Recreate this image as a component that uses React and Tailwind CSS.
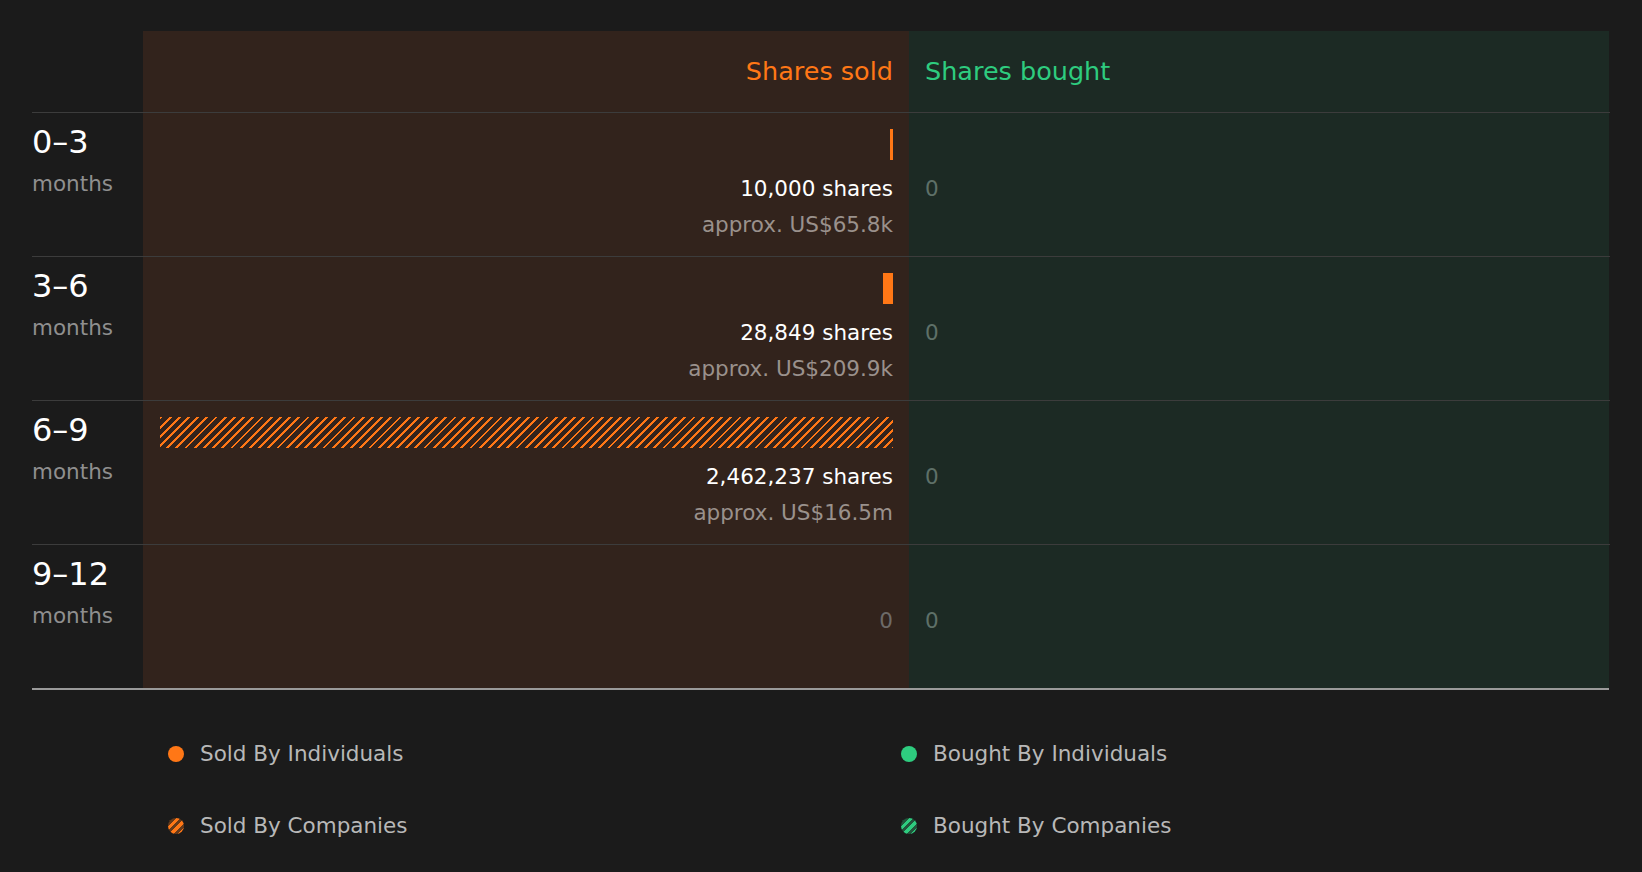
const rows = [
  { label: "0–3", bar: 3, shares: "10,000 shares", approx: "approx. US$65.8k" },
  { label: "3–6", bar: 10, shares: "28,849 shares", approx: "approx. US$209.9k" },
  { label: "6–9", bar: 733, hatch: true, shares: "2,462,237 shares", approx: "approx. US$16.5m" },
  { label: "9–12" },
];

const hatch =
  "bg-[repeating-linear-gradient(135deg,#ff7716_0_2px,transparent_2px_6.5px)]";

function Row({ r }) {
  return (
    <div className="flex h-[144px] border-t border-[#3c3c3c]">
      <div className="w-[111px] pt-[9px]">
        <div className="text-[32px] leading-[40px] text-white">{r.label}</div>
        <div className="text-[21.5px] leading-[28px] mt-[8px] text-[#8f8f8f]">months</div>
      </div>
      <div className="w-[766px] bg-[#32231c] pt-[16px] pr-[16px] flex flex-col items-end">
        <div className="h-[31px] flex justify-end">
          {r.bar ? (
            <div
              className={r.hatch ? hatch : "bg-[#ff7716]"}
              style={{ width: r.bar, height: 31 }}
            />
          ) : null}
        </div>
        {r.shares ? (
          <>
            <div className="mt-[15px] text-[21.5px] leading-[28px] text-white">{r.shares}</div>
            <div className="mt-[8px] text-[21.5px] leading-[28px] text-[#9a918c]">{r.approx}</div>
          </>
        ) : (
          <div className="mt-[15px] text-[21.5px] leading-[28px] text-[#6d6a68]">0</div>
        )}
      </div>
      <div className="w-[700px] bg-[#1c2a24] pt-[62px] pl-[16px]">
        <div className="text-[21.5px] leading-[28px] text-[#5e7068]">0</div>
      </div>
    </div>
  );
}

function Legend({ color, hatched, text }) {
  return (
    <div className="flex items-center gap-[16px]">
      <div
        className="w-[16px] h-[16px] rounded-full"
        style={
          hatched
            ? {
                background: `repeating-linear-gradient(135deg, ${color} 0 3px, ${color}55 3px 6px)`,
              }
            : { background: color }
        }
      />
      <span className="text-[21.5px] leading-[30px] text-[#b8b8b8]">{text}</span>
    </div>
  );
}

export default function App() {
  return (
    <div
      className="w-[1642px] h-[872px] bg-[#1b1b1b] px-[32px] pt-[31px]"
      style={{ fontFamily: '"DejaVu Sans", sans-serif' }}
    >
      <div className="flex h-[81px]">
        <div className="w-[111px]" />
        <div className="w-[766px] bg-[#32231c] flex items-center justify-end pr-[16px] text-[25.5px] text-[#ff7716]">
          Shares sold
        </div>
        <div className="w-[700px] bg-[#1c2a24] flex items-center pl-[16px] text-[25.5px] text-[#2ecc7f]">
          Shares bought
        </div>
      </div>
      {rows.map((r) => (
        <Row key={r.label} r={r} />
      ))}
      <div className="border-t-2 border-[#9a9a9a] w-[1577px]" />
      <div className="grid grid-cols-[733px_700px] pl-[136px] pt-[49px] gap-y-[42px]">
        <Legend color="#ff7716" text="Sold By Individuals" />
        <Legend color="#2ecc7f" text="Bought By Individuals" />
        <Legend color="#ff7716" hatched text="Sold By Companies" />
        <Legend color="#2ecc7f" hatched text="Bought By Companies" />
      </div>
    </div>
  );
}
